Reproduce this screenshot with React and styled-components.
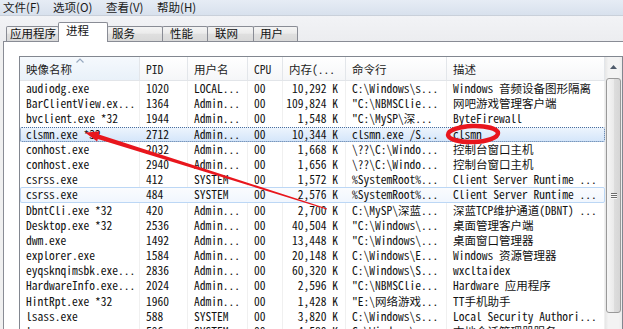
import React from 'react';
import styled, { createGlobalStyle, css } from 'styled-components';

const LIST_FONT = `"Noto Sans Mono CJK SC", "Liberation Mono", "Noto Sans CJK SC", monospace`;
const UI_FONT = `"Noto Sans CJK SC", "Noto Sans", sans-serif`;

const menus = [
  { label: '文件(F)', w: 50 },
  { label: '选项(O)', w: 53 },
  { label: '查看(V)', w: 51 },
  { label: '帮助(H)', w: 50 },
];

const tabs = [
  { label: '应用程序', w: 53, pad: 3 },
  { label: '进程', w: 50, pad: 7, active: true },
  { label: '服务', w: 56, pad: 4 },
  { label: '性能', w: 46, pad: 7 },
  { label: '联网', w: 47, pad: 7 },
  { label: '用户', w: 45, pad: 6 },
];

const columns = [
  { title: '映像名称', width: 120, sorted: true },
  { title: 'PID', width: 48 },
  { title: '用户名', width: 60 },
  { title: 'CPU', width: 35 },
  { title: '内存(...', width: 63, right: true },
  { title: '命令行', width: 101 },
  { title: '描述', width: 158 },
];

const template = columns.map((c) => `${c.width}px`).join(' ');

// 进程列表 (第4行选中, 第8行悬停)
const rows = [
  ['audiodg.exe', '1020', 'LOCAL...', '00', '10,292 K', 'C:\\Windows\\s...', 'Windows 音频设备图形隔离'],
  ['BarClientView.ex...', '1364', 'Admin...', '00', '109,824 K', '"C:\\NBMSClie...', '网吧游戏管理客户端'],
  ['bvclient.exe *32', '1944', 'Admin...', '00', '1,548 K', '"C:\\MySP\\深...', 'ByteFirewall'],
  ['clsmn.exe *32', '2712', 'Admin...', '00', '10,344 K', 'clsmn.exe /S...', 'clsmn', 'selected'],
  ['conhost.exe', '2032', 'Admin...', '00', '1,668 K', '\\??\\C:\\Windo...', '控制台窗口主机'],
  ['conhost.exe', '2940', 'Admin...', '00', '1,656 K', '\\??\\C:\\Windo...', '控制台窗口主机'],
  ['csrss.exe', '412', 'SYSTEM', '00', '1,572 K', '%SystemRoot%...', 'Client Server Runtime ...'],
  ['csrss.exe', '484', 'SYSTEM', '00', '2,576 K', '%SystemRoot%...', 'Client Server Runtime ...', 'hover'],
  ['DbntCli.exe *32', '420', 'Admin...', '00', '2,700 K', 'C:\\MySP\\深蓝...', '深蓝TCP维护通道(DBNT) ...'],
  ['Desktop.exe *32', '2536', 'Admin...', '00', '40,504 K', '"C:\\Windows\\...', '桌面管理客户端'],
  ['dwm.exe', '1492', 'Admin...', '00', '13,448 K', '"C:\\Windows\\...', '桌面窗口管理器'],
  ['explorer.exe', '1584', 'Admin...', '00', '20,148 K', 'C:\\Windows\\E...', 'Windows 资源管理器'],
  ['eyqsknqimsbk.exe...', '2836', 'Admin...', '00', '60,320 K', 'C:\\Windows\\S...', 'wxcltaidex'],
  ['HardwareInfo.exe...', '2024', 'Admin...', '00', '2,596 K', '"C:\\NBMSClie...', 'Hardware 应用程序'],
  ['HintRpt.exe *32', '1960', 'Admin...', '00', '1,428 K', '"E:\\网络游戏...', 'TT手机助手'],
  ['lsass.exe', '588', 'SYSTEM', '00', '3,820 K', 'C:\\Windows\\s...', 'Local Security Authori...'],
  ['lsm.exe', '596', 'SYSTEM', '00', '4,580 K', 'C:\\Windows\\s...', '本地会话管理器服务'],
];

const App = () => {
  return (
    <>
      <GlobalStyle />
      <Window>
        <MenuBar>
          {menus.map((m) => (
            <MenuItem key={m.label} $w={m.w}>{m.label}</MenuItem>
          ))}
        </MenuBar>

        <TabStrip>
          {tabs.map((t) => (
            <Tab key={t.label} $w={t.w} $pad={t.pad} $active={t.active}>{t.label}</Tab>
          ))}
        </TabStrip>

        <Panel>
          <ListView>
            <Columns>
              <Header>
                {columns.map((c) => (
                  <HeaderCell key={c.title} $sorted={c.sorted}>
                    {c.sorted && (
                      <SortArrow width="8" height="5" viewBox="0 0 8 5">
                        <path d="M0.5 4.5 L4 1 L7.5 4.5" fill="none" stroke="#97a9c0" strokeWidth="1.2" />
                      </SortArrow>
                    )}
                    {c.title}
                  </HeaderCell>
                ))}
              </Header>
              <Body>
                {rows.map((r, i) => (
                  <Row key={i} $state={r[7]}>
                    {columns.map((c, j) => (
                      <Cell key={j} $right={c.right}>{r[j]}</Cell>
                    ))}
                  </Row>
                ))}
              </Body>
            </Columns>

            <ScrollBar>
              <ScrollButton>
                <svg width="7" height="4" viewBox="0 0 7 4">
                  <path d="M0 4 L3.5 0 L7 4 Z" fill="#4f5b6b" />
                </svg>
              </ScrollButton>
              <Thumb>
                <Grip>
                  <span />
                  <span />
                  <span />
                </Grip>
              </Thumb>
            </ScrollBar>
          </ListView>
        </Panel>

        <Annotation viewBox="0 0 623 329" width="623" height="329">
          <polygon
            points="85,132.5 99.4,131.6 98.9,134.4 204.6,168.8 327.1,208.6 326.9,209.4 203.8,171.5 97.8,139.0 97.2,141.6"
            fill="#e8161d"
          />
          <ellipse cx="473" cy="134" rx="25" ry="8" fill="none" stroke="#e8161d" strokeWidth="4.5" transform="rotate(-2 473 134)" />
        </Annotation>
      </Window>
    </>
  );
};

export default App;



const GlobalStyle = createGlobalStyle`
  html, body {
    margin: 0;
    padding: 0;
    background: #f0f0f0;
  }
  body {
    width: 623px;
    height: 329px;
    overflow: hidden;
  }
`;

const Window = styled.div`
  position: relative;
  width: 623px;
  height: 329px;
  overflow: hidden;
  display: flex;
  flex-direction: column;
  background: #f0f0f0;
  font-family: ${UI_FONT};
`;

const MenuBar = styled.div`
  display: flex;
  flex-shrink: 0;
  height: 15px;
  padding-left: 3px;
  border-bottom: 1px solid #c9d0da;
  background: linear-gradient(#e6ecf5, #d8e1ed);
`;

const MenuItem = styled.div`
  width: ${(p) => p.$w}px;
  font-size: 11.5px;
  line-height: 15px;
  color: #1a1a1a;
`;

const TabStrip = styled.div`
  display: flex;
  flex-shrink: 0;
  align-items: flex-end;
  height: 25px;
  padding-left: 6px;
  background: linear-gradient(#f2f3f6, #ecedf0);
`;

const Tab = styled.div`
  position: relative;
  box-sizing: border-box;
  width: ${(p) => p.$w}px;
  height: ${(p) => (p.$active ? 20 : 15)}px;
  margin-bottom: ${(p) => (p.$active ? -1 : 0)}px;
  padding-left: ${(p) => p.$pad}px;
  border: 1px solid #898c95;
  border-bottom: none;
  border-radius: 2px 2px 0 0;
  font-size: 11.5px;
  line-height: ${(p) => (p.$active ? 15 : 13)}px;
  color: #111;
  background: ${(p) =>
    p.$active ? '#fff' : 'linear-gradient(#f4f4f4, #ebebeb 45%, #dfdfdf 50%, #d9d9d9)'};
  z-index: ${(p) => (p.$active ? 1 : 0)};

  & + & {
    margin-left: -1px;
  }
`;

const Panel = styled.div`
  flex: 1;
  min-height: 0;
  overflow: hidden;
  margin-left: 3px;
  padding: 14px 0 0 15px;
  border-top: 1px solid #898c95;
  border-left: 1px solid #898c95;
  background: #fff;
`;

const ListView = styled.div`
  display: flex;
  height: 300px;
  border: 1px solid #828790;
  background: #fff;
`;

const Columns = styled.div`
  display: flex;
  flex-direction: column;
  width: 585px;
`;

const Header = styled.div`
  display: grid;
  grid-template-columns: ${template};
  height: 23px;
  border-bottom: 1px solid #e2e5e9;
  background: linear-gradient(#ffffff, #f5f6f8);
`;

const HeaderCell = styled.div`
  position: relative;
  padding-left: 6px;
  border-right: 1px solid #e3e6ea;
  font-family: ${LIST_FONT};
  font-size: 11.5px;
  line-height: 24px;
  color: #1d1d1d;
  white-space: nowrap;
  overflow: hidden;
  background: ${(p) => (p.$sorted ? 'linear-gradient(#f5f9fd, #e9f1f9)' : 'transparent')};
`;

const SortArrow = styled.svg`
  position: absolute;
  top: 1px;
  left: 50%;
  transform: translateX(-50%);
`;

const Body = styled.div`
  display: flex;
  flex-direction: column;
`;

const Row = styled.div`
  display: grid;
  grid-template-columns: ${template};
  height: 15.2px;
  font-family: ${LIST_FONT};
  font-size: 11.5px;
  line-height: 15.2px;
  color: #111;
  border-radius: 2px;

  ${(p) =>
    p.$state === 'selected' &&
    css`
      background: linear-gradient(#eef5fd, #d3e5fa);
      outline: 1px dotted #4a6f9e;
      outline-offset: -1px;
      & > div { border-right-color: transparent; }
    `}

  ${(p) =>
    p.$state === 'hover' &&
    css`
      background: linear-gradient(#fbfcfe, #f0f6fe);
      box-shadow: inset 0 0 0 1px #bcd7f5;
      & > div { border-right-color: transparent; }
    `}
`;

const Cell = styled.div`
  padding: ${(p) => (p.$right ? '0 7px 0 0' : '0 0 0 6px')};
  text-align: ${(p) => (p.$right ? 'right' : 'left')};
  border-right: 1px solid #f0f0f0;
  white-space: nowrap;
  overflow: hidden;
`;

const ScrollBar = styled.div`
  display: flex;
  flex-direction: column;
  width: 17px;
  background: linear-gradient(90deg, #e6e6e6, #f3f3f3 20%, #f3f3f3 80%, #ebebeb);
`;

const ScrollButton = styled.div`
  display: flex;
  align-items: center;
  justify-content: center;
  height: 20px;
`;

const Thumb = styled.div`
  display: flex;
  align-items: center;
  justify-content: center;
  height: 233px;
  margin: 1px 1px 0 1px;
  border: 1px solid #999;
  border-radius: 3px;
  background: linear-gradient(90deg, #f6f6f6, #ebebeb 50%, #dedede 51%, #d6d6d6);
`;

const Grip = styled.div`
  display: flex;
  flex-direction: column;
  gap: 1px;

  span {
    display: block;
    width: 6px;
    height: 1px;
    background: #6d6d6d;
    box-shadow: 0 1px 0 #fafafa;
  }
`;

const Annotation = styled.svg`
  position: absolute;
  top: 0;
  left: 0;
  pointer-events: none;
`;
